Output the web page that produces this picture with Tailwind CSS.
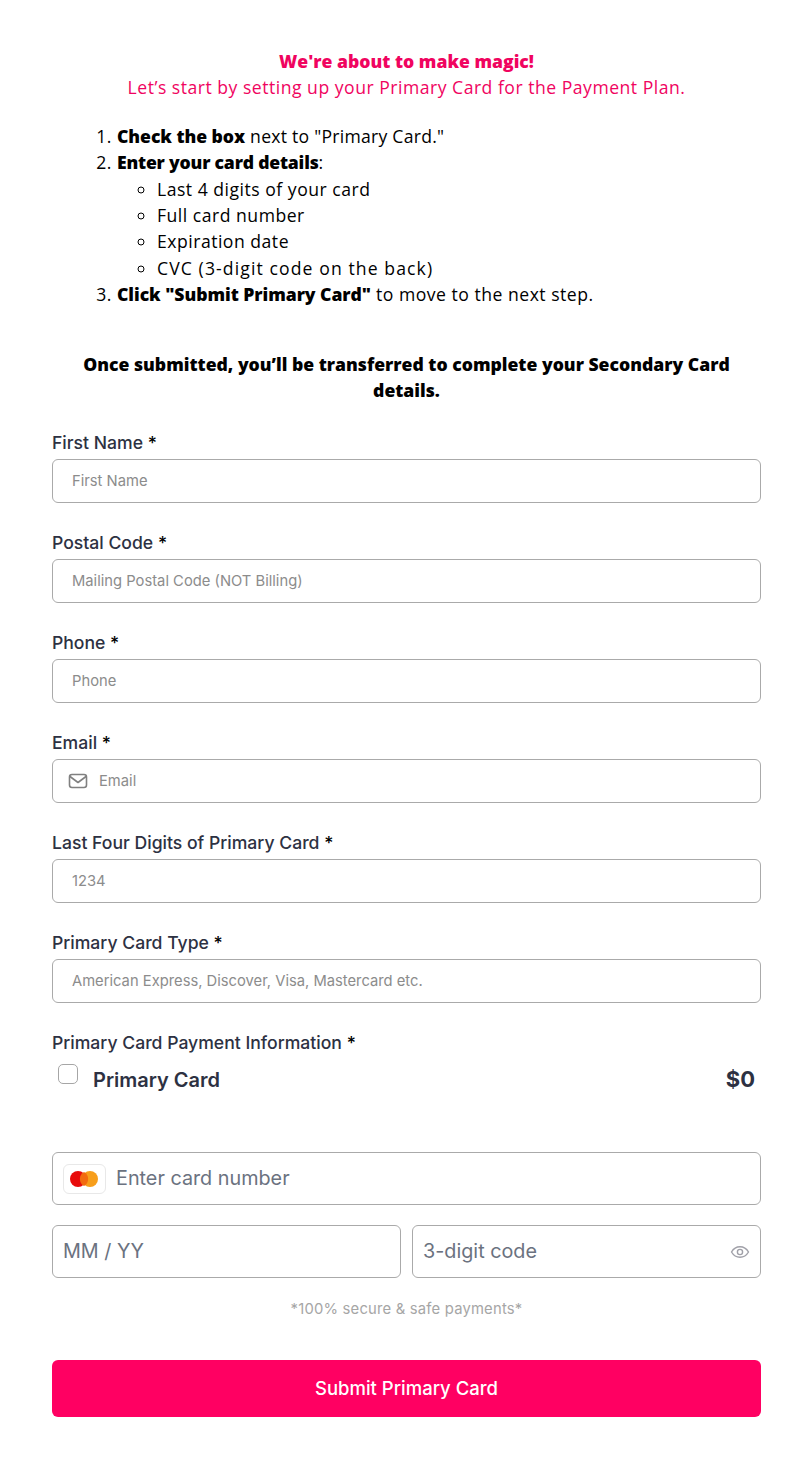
<!DOCTYPE html>
<html lang="en">
<head>
    <meta charset="UTF-8">
    <meta name="viewport" content="width=device-width, initial-scale=1.0">
    <title>Primary Card</title>
    <script src="https://cdn.jsdelivr.net/npm/@tailwindcss/browser@4"></script>
</head>
<body class="bg-white font-['Inter',sans-serif]">
    <div class="w-[812px] h-[1477px] pl-[52px] pr-[51px] pt-[48px] overflow-hidden">

        <!-- intro text -->
        <div class="font-['Open_Sans',sans-serif] text-[17.6px] leading-[26.4px]">
            <p class="text-center text-[#f0045f] font-extrabold">We're about to make magic!</p>
            <p class="text-center text-[#f0045f] tracking-[0.5px]">Let’s start by setting up your Primary Card for the Payment Plan.</p>

            <ol class="list-decimal pl-[65px] mt-[22px] text-black tracking-[0.5px]">
                <li><b class="font-extrabold tracking-[-0.05px]">Check the box</b> <span class="tracking-[0.25px]">next to "Primary Card."</span></li>
                <li><b class="font-extrabold tracking-[-0.2px]">Enter your card details</b>:
                    <ul class="list-[circle] pl-10">
                        <li>Last 4 digits of your card</li>
                        <li>Full card number</li>
                        <li>Expiration date</li>
                        <li class="tracking-[1.1px]">CVC (3-digit code on the back)</li>
                    </ul>
                </li>
                <li><b class="font-extrabold tracking-[-0.05px]">Click "Submit Primary Card"</b> to move to the next step.</li>
            </ol>

            <p class="text-center font-extrabold text-black mt-[43px] px-6">Once submitted, you’ll be transferred to complete your Secondary Card details.</p>
        </div>

        <!-- form -->
        <form class="mt-[27px]">
            <div class="h-[100px]">
                <label class="block pt-[1px] text-[17.6px] leading-6 font-medium text-[#2d3142] mb-[4px]">First Name <span class="text-black">*</span></label>
                <input type="text" placeholder="First Name" class="w-full h-[44px] px-[19px] border border-[#aaaaaa] rounded-md text-[14.75px] text-[#333] placeholder-[#8c8c8c]">
            </div>
            <div class="h-[100px]">
                <label class="block pt-[1px] text-[17.6px] leading-6 font-medium text-[#2d3142] mb-[4px]">Postal Code <span class="text-black">*</span></label>
                <input type="text" placeholder="Mailing Postal Code (NOT Billing)" class="w-full h-[44px] px-[19px] border border-[#aaaaaa] rounded-md text-[14.75px] text-[#333] placeholder-[#8c8c8c]">
            </div>
            <div class="h-[100px]">
                <label class="block pt-[1px] text-[17.6px] leading-6 font-medium text-[#2d3142] mb-[4px]">Phone <span class="text-black">*</span></label>
                <input type="text" placeholder="Phone" class="w-full h-[44px] px-[19px] border border-[#aaaaaa] rounded-md text-[14.75px] text-[#333] placeholder-[#8c8c8c]">
            </div>
            <div class="h-[100px]">
                <label class="block pt-[1px] text-[17.6px] leading-6 font-medium text-[#2d3142] mb-[4px]">Email <span class="text-black">*</span></label>
                <div class="flex items-center gap-[11px] h-[44px] px-[15px] border border-[#aaaaaa] rounded-md">
                    <svg class="w-5 h-5 text-[#808080] shrink-0" viewBox="0 0 20 20" fill="none" stroke="currentColor" stroke-width="1.6" stroke-linecap="round" stroke-linejoin="round">
                        <rect x="1.5" y="3.5" width="17" height="13" rx="2.5"></rect>
                        <path d="M2 5.5l8 6 8-6"></path>
                    </svg>
                    <input type="text" placeholder="Email" class="w-full text-[14.75px] text-[#333] placeholder-[#8c8c8c]">
                </div>
            </div>
            <div class="h-[100px]">
                <label class="block pt-[1px] text-[17.6px] leading-6 font-medium text-[#2d3142] mb-[4px]">Last Four Digits of Primary Card <span class="text-black">*</span></label>
                <input type="text" placeholder="1234" class="w-full h-[44px] px-[19px] border border-[#aaaaaa] rounded-md text-[14.75px] text-[#333] placeholder-[#8c8c8c]">
            </div>
            <div class="h-[100px]">
                <label class="block pt-[1px] text-[17.6px] leading-6 font-medium text-[#2d3142] mb-[4px]">Primary Card Type <span class="text-black">*</span></label>
                <input type="text" placeholder="American Express, Discover, Visa, Mastercard etc." class="w-full h-[44px] px-[19px] border border-[#aaaaaa] rounded-md text-[14.75px] text-[#333] placeholder-[#8c8c8c]">
            </div>

            <label class="block pt-[1px] text-[17.6px] leading-6 font-medium text-[#2d3142]">Primary Card Payment Information <span class="text-black">*</span></label>

            <div class="flex items-start justify-between pl-[6px] pr-[6px] mt-[10px]">
                <div class="flex items-start gap-[15px]">
                    <span class="block w-5 h-5 mt-[-1px] border border-[#a6a6a6] rounded-[5px]"></span>
                    <span class="text-xl leading-7 mt-[1px] font-semibold text-[#2d3142]">Primary Card</span>
                </div>
                <span class="text-[22px] leading-7 font-bold text-[#2d3142]">$0</span>
            </div>

            <!-- card fields -->
            <div class="flex items-center gap-[10px] h-[53px] px-[10px] border border-[#aaaaaa] rounded-md mt-[58px]">
                <span class="flex items-center justify-center w-[43px] h-[30px] border border-[#e8e8e8] rounded-md shrink-0">
                    <svg class="mr-[1px]" width="28" height="16" viewBox="0 0 28 16">
                        <circle cx="8" cy="8" r="8" fill="#e80b0b"></circle>
                        <circle cx="20" cy="8" r="8" fill="#f79e1b"></circle>
                        <path d="M14 1a8 8 0 0 1 0 14a8 8 0 0 1 0-14z" fill="#f26a0f"></path>
                    </svg>
                </span>
                <input type="text" placeholder="Enter card number" class="w-full text-[19.8px] text-[#333] placeholder-[#6b7280]">
            </div>
            <div class="grid grid-cols-2 gap-[11px] mt-[20px]">
                <div class="flex items-center h-[53px] px-[10px] border border-[#aaaaaa] rounded-md">
                    <input type="text" placeholder="MM / YY" class="w-full text-[19.8px] text-[#333] placeholder-[#6b7280]">
                </div>
                <div class="flex items-center h-[53px] px-[10px] border border-[#aaaaaa] rounded-md">
                    <input type="text" placeholder="3-digit code" class="w-full text-[19.8px] text-[#333] placeholder-[#6b7280]">
                    <svg class="w-5 h-5 text-[#a0a0a8] shrink-0" viewBox="0 0 20 20" fill="none" stroke="currentColor" stroke-width="1.4">
                        <path d="M1.500 10C3.500 6.600 6.500 4.800 10 4.800s6.500 1.800 8.500 5.200c-2 3.400-5 5.200-8.500 5.200S3.500 13.400 1.500 10z"></path>
                        <circle cx="10" cy="10" r="2.600"></circle>
                    </svg>
                </div>
            </div>

            <p class="text-center text-[14.8px] leading-5 tracking-[0.2px] text-[#a6a6a6] mt-[21px]">*100% secure &amp; safe payments*</p>

            <button type="button" class="block w-full h-[57px] mt-[41px] rounded-md bg-[#ff0062] text-white text-[18.5px] font-medium">Submit Primary Card</button>
        </form>
    </div>
</body>
</html>
